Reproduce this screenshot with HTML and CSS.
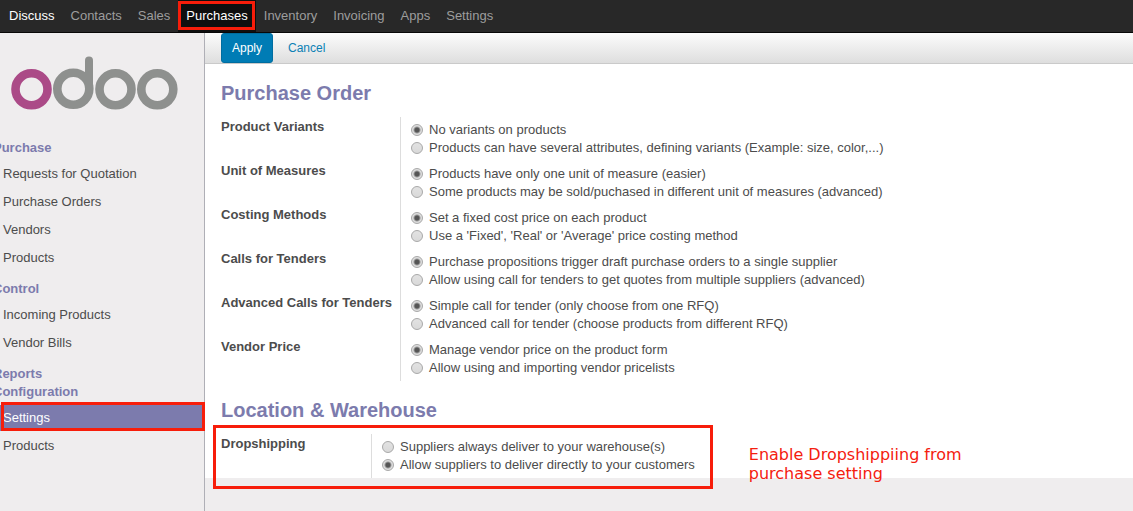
FILE: index.html
```html
<!DOCTYPE html>
<html lang="en">
<head>
<meta charset="utf-8">
<title>Purchases - Settings</title>
<link rel="stylesheet" href="styles.css">
</head>
<body>
<nav class="topbar" aria-label="Applications">
  <a class="app bright" href="#">Discuss</a>
  <a class="app" href="#">Contacts</a>
  <a class="app" href="#">Sales</a>
  <a class="app current" href="#" aria-current="page">Purchases</a>
  <a class="app" href="#">Inventory</a>
  <a class="app" href="#">Invoicing</a>
  <a class="app" href="#">Apps</a>
  <a class="app" href="#">Settings</a>
</nav>
<div class="layout">
  <aside class="sidebar">
    <a class="logo" href="#" aria-label="odoo">
      <svg width="168" height="54" viewBox="0 0 168 54" fill="none" stroke-width="8.600">
        <circle cx="20.500" cy="33.300" r="16" stroke="#ab4a87"/>
        <g stroke="#8e908e">
          <circle cx="62.300" cy="32.800" r="16"/>
          <circle cx="104.500" cy="33.300" r="16"/>
          <circle cx="146.300" cy="33.300" r="16"/>
          <path d="M78 33V4.400" stroke-width="8" stroke-linecap="round"/>
        </g>
      </svg>
    </a>
    <nav class="menu" aria-label="Purchases">
      <h3 class="menu-title">Purchase</h3>
      <ul class="menu-list">
        <li><a class="menu-item" href="#">Requests for Quotation</a></li>
        <li><a class="menu-item" href="#">Purchase Orders</a></li>
        <li><a class="menu-item" href="#">Vendors</a></li>
        <li><a class="menu-item" href="#">Products</a></li>
      </ul>
      <h3 class="menu-title">Control</h3>
      <ul class="menu-list">
        <li><a class="menu-item" href="#">Incoming Products</a></li>
        <li><a class="menu-item" href="#">Vendor Bills</a></li>
      </ul>
      <h3 class="menu-title">Reports</h3>
      <h3 class="menu-title">Configuration</h3>
      <ul class="menu-list">
        <li><a class="menu-item active" href="#" aria-current="page">Settings</a></li>
        <li><a class="menu-item" href="#">Products</a></li>
      </ul>
    </nav>
  </aside>
  <main class="main">
    <form class="form">
      <div class="toolbar">
        <button class="apply" type="button">Apply</button>
        <button class="cancel" type="button">Cancel</button>
      </div>
      <div class="sheet">
        <h2 class="section-title">Purchase Order</h2>
        <div class="settings">
          <div class="setting" role="radiogroup" aria-labelledby="variants">
            <div class="name" id="variants">Product Variants</div>
            <div class="options">
              <label class="option"><input class="radio" type="radio" name="variants" checked>No variants on products</label>
              <label class="option"><input class="radio" type="radio" name="variants">Products can have several attributes, defining variants (Example: size, color,...)</label>
            </div>
          </div>
          <div class="setting" role="radiogroup" aria-labelledby="uom">
            <div class="name" id="uom">Unit of Measures</div>
            <div class="options">
              <label class="option"><input class="radio" type="radio" name="uom" checked>Products have only one unit of measure (easier)</label>
              <label class="option"><input class="radio" type="radio" name="uom">Some products may be sold/puchased in different unit of measures (advanced)</label>
            </div>
          </div>
          <div class="setting" role="radiogroup" aria-labelledby="costing">
            <div class="name" id="costing">Costing Methods</div>
            <div class="options">
              <label class="option"><input class="radio" type="radio" name="costing" checked>Set a fixed cost price on each product</label>
              <label class="option"><input class="radio" type="radio" name="costing">Use a 'Fixed', 'Real' or 'Average' price costing method</label>
            </div>
          </div>
          <div class="setting" role="radiogroup" aria-labelledby="tenders">
            <div class="name" id="tenders">Calls for Tenders</div>
            <div class="options">
              <label class="option"><input class="radio" type="radio" name="tenders" checked>Purchase propositions trigger draft purchase orders to a single supplier</label>
              <label class="option"><input class="radio" type="radio" name="tenders">Allow using call for tenders to get quotes from multiple suppliers (advanced)</label>
            </div>
          </div>
          <div class="setting" role="radiogroup" aria-labelledby="advanced">
            <div class="name" id="advanced">Advanced Calls for Tenders</div>
            <div class="options">
              <label class="option"><input class="radio" type="radio" name="advanced" checked>Simple call for tender (only choose from one RFQ)</label>
              <label class="option"><input class="radio" type="radio" name="advanced">Advanced call for tender (choose products from different RFQ)</label>
            </div>
          </div>
          <div class="setting" role="radiogroup" aria-labelledby="price">
            <div class="name" id="price">Vendor Price</div>
            <div class="options">
              <label class="option"><input class="radio" type="radio" name="price" checked>Manage vendor price on the product form</label>
              <label class="option"><input class="radio" type="radio" name="price">Allow using and importing vendor pricelists</label>
            </div>
          </div>
        </div>
        <h2 class="section-title">Location &amp; Warehouse</h2>
        <div class="settings compact">
          <div class="setting" role="radiogroup" aria-labelledby="dropshipping">
            <div class="name" id="dropshipping">Dropshipping</div>
            <div class="options">
              <label class="option"><input class="radio" type="radio" name="dropshipping">Suppliers always deliver to your warehouse(s)</label>
              <label class="option"><input class="radio" type="radio" name="dropshipping" checked>Allow suppliers to deliver directly to your customers</label>
            </div>
          </div>
          <p class="note">Enable Dropshippiing from purchase setting</p>
        </div>
      </div>
    </form>
  </main>
</div>
</body>
</html>
```
FILE: styles.css
```css
* {
  box-sizing: border-box;
}

body {
  display: flex;
  flex-direction: column;
  min-height: 100vh;
  margin: 0;
  background: #efedee;
  color: #4c4c4c;
  font: 13px/18px "Liberation Sans", Arial, sans-serif;
}

a {
  color: inherit;
  text-decoration: none;
}

.topbar {
  display: flex;
  height: 33px;
  padding-left: 1px;
  background: #282828;
  border-bottom: 1px solid #080808;
}

.app {
  padding: 7px 8px;
  color: #9d9d9d;
}

.bright {
  color: #fff;
}

.current {
  position: relative;
  background: #0f0f0f;
  color: #fff;
}

/* Red highlight frames */
.current::after,
.active::after,
.compact::after {
  content: "";
  position: absolute;
  border: 3px solid #f71d0a;
  pointer-events: none;
}

.current::after {
  inset: 1px 1px 2px 0;
}

.layout {
  display: flex;
  flex: 1;
}

.sidebar {
  flex: none;
  width: 205px;
  border-right: 1px solid #afafb6;
}

.logo {
  display: block;
  height: 106px;
  padding: 23px 0 0 11px;
}

.logo svg {
  display: block;
}

.menu-title {
  margin: 0 0 0 -7px;
  color: #7c7bad;
  font-size: 13px;
}

.menu-list {
  margin: 4px 0 9px;
  padding: 0;
  list-style: none;
}

.menu-item {
  display: block;
  margin: 2px 0;
  padding: 4px 3px;
}

.active {
  position: relative;
  background: #7c7bad;
  color: #fff;
}

.active::after {
  inset: -3px -1px 0 1px;
}

.main {
  flex: 1;
}

.toolbar {
  display: flex;
  gap: 4px;
  height: 31px;
  padding-left: 16px;
  background: linear-gradient(#fcfcfc, #dedede);
  border-bottom: 1px solid #cacaca;
}

.apply,
.cancel {
  padding: 0 10px;
  border: 1px solid transparent;
  border-radius: 3px;
  background: none;
  color: #0b81b5;
  font: 12px/18px "Liberation Sans", Arial, sans-serif;
}

.apply {
  background: #007cb5;
  border-color: #006da0;
  color: #fff;
}

.sheet {
  display: flow-root;
  padding: 0 16px;
  background: #fff;
}

.section-title {
  margin: 17px 0 12px;
  color: #7c7bad;
  font-size: 20px;
  line-height: 24px;
}

.setting {
  display: grid;
  grid-template-columns: 179px 1fr;
}

.name {
  padding-top: 1px;
  font-weight: bold;
  white-space: nowrap;
}

.options {
  padding: 4px 0 4px 10px;
  border-left: 1px solid #ddd;
}

.option {
  display: flex;
  align-items: center;
  gap: 6px;
}

.radio {
  flex: none;
  width: 12px;
  height: 12px;
  margin: 0;
  appearance: none;
  border: 1px solid #a8a8a8;
  border-radius: 50%;
  background: linear-gradient(#e2e2e2, #d9d9d9);
}

.radio:checked {
  background: radial-gradient(circle, #555 0 2px, #dedede 4px);
}

.compact {
  position: relative;
  width: fit-content;
}

.compact .setting {
  grid-template-columns: 150px auto;
}

.compact::after {
  inset: -9px -18px -11px -8px;
}

.note {
  position: absolute;
  top: 11px;
  left: calc(100% + 54px);
  width: 220px;
  margin: 0;
  color: #f4200f;
  font: 16px/19px "DejaVu Sans", sans-serif;
}
```
